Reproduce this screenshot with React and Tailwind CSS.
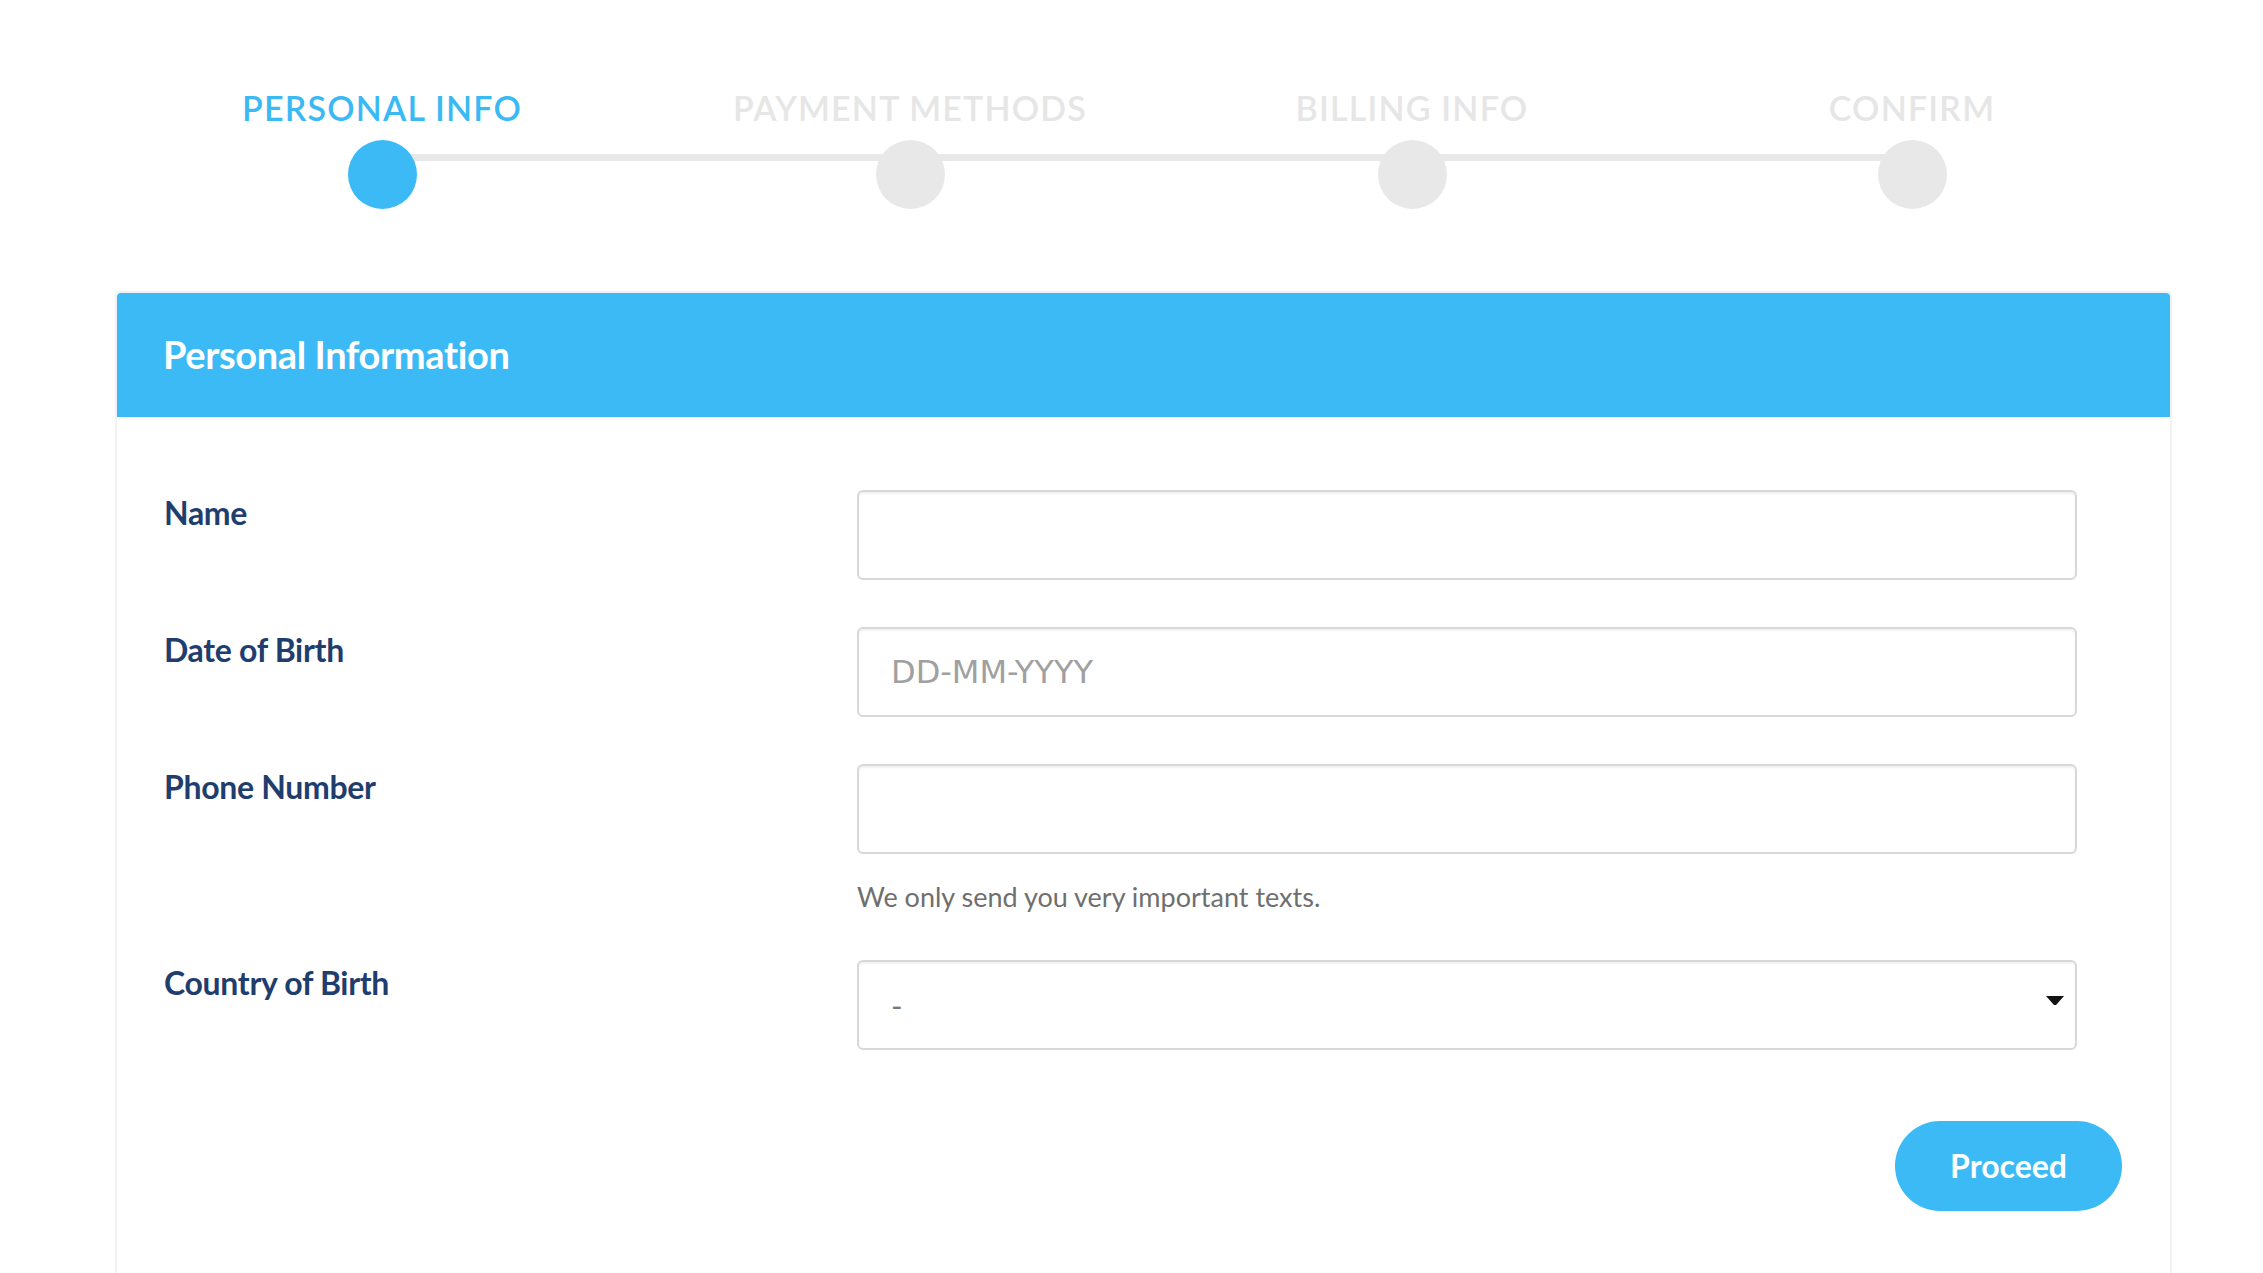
import React from 'react';

const steps = [
  { label: 'PERSONAL INFO', active: true, ml: 'ml-0' },
  { label: 'PAYMENT METHODS', active: false, ml: 'ml-[168px]' },
  { label: 'BILLING INFO', active: false, ml: 'ml-[142px]' },
  { label: 'CONFIRM', active: false, ml: 'ml-[140px]' },
];

const Step = ({ label, active, ml }) => (
  <div className={`relative z-10 flex w-[360px] flex-col items-center ${ml}`}>
    <span
      className={`whitespace-nowrap text-[34px] font-semibold leading-none tracking-[0.035em] ${
        active ? 'text-[#3bb9f4]' : 'text-[#e6e6e6]'
      }`}
    >
      {label}
    </span>
    <div className={`mt-[15px] h-[69px] w-[69px] rounded-full ${active ? 'bg-[#3bbaf5]' : 'bg-[#e8e8e8]'}`}></div>
  </div>
);

const inputCls =
  'h-[90px] w-full rounded-[6px] border-2 border-[#d8d8d8] bg-white px-[32px] text-[31px] text-[#555] shadow-[inset_0_2px_2px_rgba(0,0,0,0.06)] outline-none placeholder:text-[#a0a0a0] placeholder:text-[32px]';

const Row = ({ label, className = '', children }) => (
  <div className={`flex items-start ${className}`}>
    <label className="mt-[4px] w-[693px] shrink-0 text-[32px] font-bold leading-[1.2] tracking-[-0.01em] text-[#1f3d6d]">
      {label}
    </label>
    <div className="flex-1">{children}</div>
  </div>
);

export default function App() {
  return (
    <div className="h-screen overflow-hidden bg-white font-['Lato','Noto_Sans',sans-serif]">
      {/* Stepper */}
      <div className="relative flex pl-[202px] pt-[91px]">
        <div className="absolute left-[382px] top-[154px] h-[7px] w-[1530px] bg-[#e8e8e8]"></div>
        {steps.map((s) => (
          <Step key={s.label} {...s} />
        ))}
      </div>

      {/* Card */}
      <div className="ml-[115px] mt-[82px] w-[2057px] rounded-t-[5px] border-2 border-b-0 border-[#f1f2f4] bg-white">
        <div className="flex h-[124px] items-center rounded-t-[4px] bg-[#3bbaf5] px-[46px]">
          <h2 className="text-[38px] font-bold leading-[1.2] tracking-[-0.01em] text-white">Personal Information</h2>
        </div>

        <div className="pb-[120px] pl-[47px]">
          <div className="pr-[93px]">
            <Row label="Name" className="pt-[73px]">
              <input type="text" className={inputCls} />
            </Row>
            <Row label="Date of Birth" className="mt-[47px]">
              <input type="text" placeholder="DD-MM-YYYY" className={`${inputCls} font-['DejaVu_Sans',sans-serif]`} />
            </Row>
            <Row label="Phone Number" className="mt-[47px]">
              <input type="text" className={inputCls} />
              <p className="mt-[27px] text-[27px] leading-[1.2] text-[#6f6f6f]">We only send you very important texts.</p>
            </Row>
            <Row label="Country of Birth" className="mt-[47px]">
              <div className="relative">
                <select defaultValue="-" className={`${inputCls} appearance-none text-[#777]`}>
                  <option value="-">-</option>
                  <option value="us">United States</option>
                  <option value="uk">United Kingdom</option>
                </select>
                <svg
                  className="pointer-events-none absolute right-[13px] top-[36px]"
                  width="18"
                  height="10"
                  viewBox="0 0 18 10"
                >
                  <path d="M0 0 H18 L10 9 H8 Z" fill="#111" />
                </svg>
              </div>
            </Row>
          </div>

          <div className="mt-[71px] flex justify-end pr-[48px]">
            <button className="h-[90px] rounded-full bg-[#3bbaf5] px-[55px] text-[32px] font-bold text-white">
              Proceed
            </button>
          </div>
        </div>
      </div>
    </div>
  );
}
